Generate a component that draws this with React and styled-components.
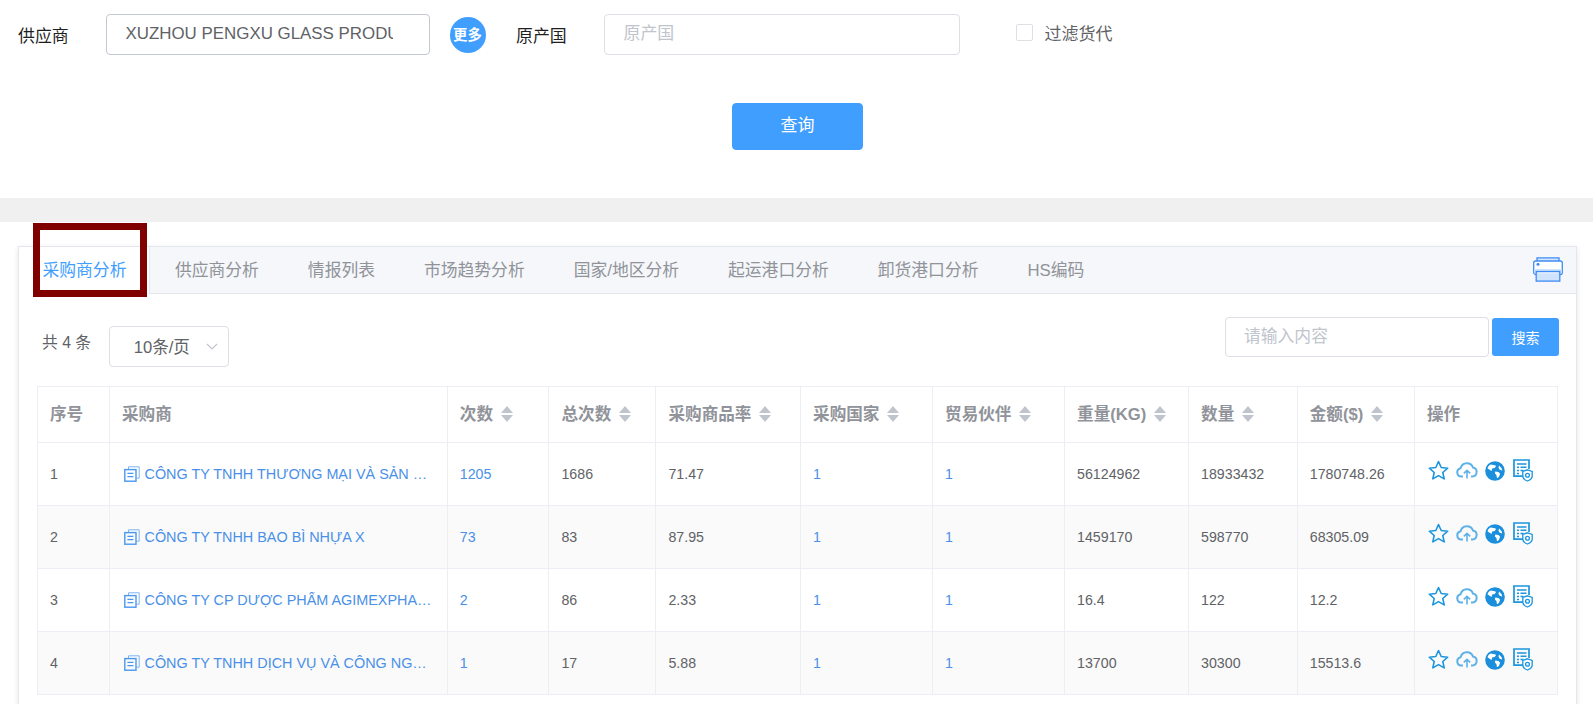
import React from "react";
import styled, { createGlobalStyle } from "styled-components";

const Global = createGlobalStyle`
  html, body { margin: 0; padding: 0; background: #fff; height: 704px; overflow: hidden; }
  body { font-family: "Liberation Sans", "Noto Sans CJK SC", sans-serif; }
  * { box-sizing: border-box; }
`;
const Page = styled.div`width: 1593px; height: 704px; overflow: hidden; background: #fff;`;
const FilterPanel = styled.section`height: 198px; padding: 14px 0 0 18px;`;
const FilterRow = styled.div`display: flex; align-items: center; height: 41px;`;
const FieldLabel = styled.label`width: 88px; font-size: 16.9px; color: #1f1f1f; flex: none; margin-top: -1px;`;
const TextInput = styled.input`
  width: ${p => p.$w}px; height: 41px; flex: none; padding: 0 36px 2px 18.5px;
  border: 1px solid ${p => p.$strong ? "#c4c8d0" : "#dcdfe6"}; border-radius: 4px; outline: none;
  font: 16.9px "Liberation Sans", "Noto Sans CJK SC", sans-serif; color: #606266; background: #fff;
  &::placeholder { color: #c0c4cc; }
`;
const MoreButton = styled.button`
  width: 36px; height: 36px; margin: 0 30.5px 0 19.5px; flex: none; border: 0; border-radius: 50%; padding: 0 0 2px;
  background: #409eff; color: #fff; font: bold 14.4px "Liberation Sans", "Noto Sans CJK SC", sans-serif; white-space: nowrap;
`;
const CheckWrap = styled.label`display: flex; align-items: center; margin-left: 55.5px; color: #606266; font-size: 17px; gap: 12px; margin-top: -5px;`;
const CheckBox = styled.span`width: 17px; height: 17px; border: 1px solid #dcdfe6; border-radius: 2px; background: #fff;`;
const QueryButton = styled.button`
  display: block; width: 131px; height: 47.5px; margin: 47.5px 0 0 714px; padding: 0 0 5px; border: 1px solid #409eff; border-radius: 4px;
  background: #409eff; color: #fff; font: 17px "Liberation Sans", "Noto Sans CJK SC", sans-serif;
`;
const GreyBand = styled.div`height: 24px; background: #f0f0f0;`;
const Main = styled.main`padding: 24px 16px 0 18px;`;
const Card = styled.div`
  width: 1559px; height: 600px; border: 1px solid #e4e7ed; background: #fff;
  box-shadow: 0 2px 6px rgba(0,0,0,.10);
`;
const TabBar = styled.div`
  position: relative; display: flex; height: 47px; background: #f5f7fa; border-bottom: 1px solid #e4e7ed;
`;
const Tab = styled.div`
  position: relative; height: ${p => p.$active ? "47px" : "46px"}; padding: 1px 24.5px 0; line-height: 46px; font-size: 16.8px;
  color: ${p => p.$active ? "#409eff" : "#909399"};
  background: ${p => p.$active ? "#fff" : "transparent"};
  border-right: ${p => p.$active ? "1px solid #e4e7ed" : "0"};
  &:first-child { padding-left: 23.5px; padding-right: 23px; }
`;
const Highlight = styled.span`
  position: absolute; left: 14px; top: -24px; width: 114px; height: 74px; border: 7px solid #800000; pointer-events: none;
`;
const PrintIcon = styled.svg`position: absolute; right: 13px; top: 10px;`;
const Body = styled.div`padding: 0 18px;`;
const Toolbar = styled.div`display: flex; justify-content: space-between; align-items: flex-start; height: 92px; padding-top: 23px; margin-right: -1px;`;
const PageGroup = styled.div`display: flex; align-items: center; margin-top: 9px;`;
const Total = styled.span`font-size: 15.8px; color: #606266; margin: -11px 18px 0 5px;`;
const PageSelect = styled.div`
  position: relative; width: 120px; height: 41px; padding-left: 23.5px; line-height: 41px;
  border: 1px solid #dcdfe6; border-radius: 4px; font-size: 16.6px; color: #606266;
`;
const Chevron = styled.svg`position: absolute; right: 10px; top: 16px;`;
const SearchGroup = styled.div`display: flex; align-items: center; gap: 3px;`;
const SearchInput = styled.input`
  width: 264px; height: 40px; padding: 0 18px; border: 1px solid #dcdfe6; border-radius: 4px; outline: none;
  font: 16.8px "Liberation Sans", "Noto Sans CJK SC", sans-serif;
  &::placeholder { color: #c0c4cc; }
`;
const SearchButton = styled.button`
  width: 67px; height: 38px; border: 0; border-radius: 3px; background: #409eff; color: #fff;
  font: 14px "Liberation Sans", "Noto Sans CJK SC", sans-serif;
`;
const Table = styled.table`
  width: 1520.5px; table-layout: fixed; border-collapse: collapse; border: 1px solid #ebeef5;
`;
const Col = styled.col`width: ${p => p.$w}px;`;
const Th = styled.th`
  height: 56px; padding: 0 12px 4px; border: 1px solid #ebeef5; text-align: left; font-size: 16.6px; font-weight: bold; color: #909399; white-space: nowrap;
`;
const Row = styled.tr`background: ${p => p.$even ? "#fafafa" : "#fff"};`;
const Td = styled.td`
  height: 63px; padding: 0 12px; border: 1px solid #ebeef5; font-size: 14.2px; color: ${p => p.$link ? "#4a90e8" : "#606266"}; white-space: nowrap;
`;
const BuyerLink = styled.div`display: flex; align-items: center; gap: 5px; color: #4a90e8; padding-left: 1.5px;`;
const BuyerName = styled.span`flex: 1; min-width: 0; overflow: hidden; text-overflow: ellipsis; white-space: nowrap; padding-right: 1px; font-size: 14.4px;`;
const HeadInner = styled.span`display: inline-flex; align-items: center; gap: 8px;`;
const Caret = styled.svg`flex: none; margin-top: 3px;`;
const Actions = styled.div`display: flex; align-items: center; gap: 7px; margin: -7px 0 0 1.5px;`;
const DocIcon = styled.svg`margin-left: 1px;`;

const tabs = ["采购商分析", "供应商分析", "情报列表", "市场趋势分析", "国家/地区分析", "起运港口分析", "卸货港口分析", "HS编码"];
const widths = [72, 337.8, 101.7, 107, 144.6, 132, 132, 124, 108.7, 117.2, 143.5];
const heads = [["序号"], ["采购商"], ["次数", 1], ["总次数", 1], ["采购商品率", 1], ["采购国家", 1], ["贸易伙伴", 1], ["重量(KG)", 1], ["数量", 1], ["金额($)", 1], ["操作"]];
const rows = [
  ["1", "CÔNG TY TNHH THƯƠNG MẠI VÀ SẢN XUẤT BAO BÌ VIỆT NAM", "1205", "1686", "71.47", "1", "1", "56124962", "18933432", "1780748.26"],
  ["2", "CÔNG TY TNHH BAO BÌ NHỰA X", "73", "83", "87.95", "1", "1", "1459170", "598770", "68305.09"],
  ["3", "CÔNG TY CP DƯỢC PHẨM AGIMEXPHARM AN GIANG", "2", "86", "2.33", "1", "1", "16.4", "122", "12.2"],
  ["4", "CÔNG TY TNHH DỊCH VỤ VÀ CÔNG NGHỆ VIỆT NAM", "1", "17", "5.88", "1", "1", "13700", "30300", "15513.6"],
];
const linkCols = new Set([2, 5, 6]);

const SortCaret = () => (
  <Caret width="12" height="16" viewBox="0 0 12 16"><path d="M6 0l6 7H0z M0 9h12l-6 7z" fill="#c0c4cc" /></Caret>
);
const CopyIcon = () => (
  <svg width="16" height="16" viewBox="0 0 16 16" fill="none" stroke="#4a97f0" style={{ flex: "none" }}>
    <path d="M4.5 3.5V.8h10.7v11.4h-2.7" strokeWidth="1" stroke="#7db4f5" />
    <rect x="0.8" y="3.6" width="11.2" height="11.6" strokeWidth="1.4" />
    <path d="M3.4 7.4h6M3.4 10.6h6" strokeWidth="1.2" />
  </svg>
);
const Star = () => (
  <svg width="21" height="21" viewBox="0 0 21 21" fill="none" stroke="#1b95de" strokeWidth="1.6" strokeLinejoin="round">
    <path d="M10.5 1.5l2.7 6 6.5.7-4.9 4.3 1.4 6.4-5.7-3.3-5.7 3.3 1.4-6.4L1.3 8.2l6.5-.7z" />
  </svg>
);
const Cloud = () => (
  <svg width="22" height="17" viewBox="0 0 22 17" fill="none" stroke="#5fb2e8" strokeWidth="2" strokeLinejoin="round">
    <path d="M7 14.5H5.2A4.2 4.2 0 0 1 4.6 6.2 6.5 6.5 0 0 1 17 5.6a4.5 4.5 0 0 1-.5 8.9H15" />
    <path d="M11 16.5V8.5M7.8 11.4l3.2-3 3.2 3" strokeWidth="1.6" />
  </svg>
);
const Globe = () => (
  <svg width="20" height="20" viewBox="0 0 20 20">
    <circle cx="10" cy="10" r="9.8" fill="#1b8fdb" />
    <path d="M5.5 3.5c2 .3 4.2.2 5.6 1.6l-1.4 2-2.6.4-.5 2.4-2.4-1.3-1.7-1.3C3 5.6 4 4.3 5.5 3.5zM10.3 10.6l3.2.4 1.6 1.7-1.2 3.2-1.9 1.3-.6-3.2-1.5-1.5zM14 4.6l2.6 2.6.6 2.2-2.5-.6-1.2-2z" fill="#fff" />
  </svg>
);
const Doc = () => (
  <DocIcon width="20" height="23" viewBox="0 0 20 23" fill="none" stroke="#1b95de">
    <path d="M11 17.2H1V1h15v9" strokeWidth="1.7" />
    <path d="M4 5h9.5M4 8.2h2M7.5 8.2h6M4 11.4h2M7.5 11.4h3M4 14.4h2" strokeWidth="1.5" />
    <path d="M14.5 10.8l4.7 1.6v4.6c0 2.6-2.4 4.2-4.7 5-2.3-.8-4.7-2.4-4.7-5v-4.6z" fill="#fff" strokeWidth="1.3" />
    <circle cx="14.5" cy="16.3" r="1.9" strokeWidth="1.3" />
  </DocIcon>
);
const Printer = () => (
  <PrintIcon width="30" height="25" viewBox="0 0 30 25" fill="none" stroke="#3f8cf5" strokeWidth="1.3">
    <path d="M4 4.5V.8h22v3.7" fill="#d6e6fc" />
    <rect x="0.7" y="4" width="28.6" height="13.5" rx="2" fill="#fff" />
    <path d="M1.3 12h27.4v3.6a1.4 1.4 0 0 1-1.4 1.4H2.7a1.4 1.4 0 0 1-1.4-1.4z" fill="#cfe3fc" stroke="none" />
    <rect x="3.2" y="14.5" width="23.6" height="9.6" fill="#cfe3fc" />
    <path d="M5 16h20" stroke="#eaf3fe" strokeWidth="1" />
    <circle cx="5" cy="7.2" r="1.5" fill="#3f8cf5" stroke="none" />
  </PrintIcon>
);

export default function App() {
  return (
    <Page>
      <Global />
      <FilterPanel>
        <FilterRow>
          <FieldLabel>供应商</FieldLabel>
          <TextInput $w={324} $strong readOnly value="XUZHOU PENGXU GLASS PRODUCTS CO., LTD" />
          <MoreButton>更多</MoreButton>
          <FieldLabel>原产国</FieldLabel>
          <TextInput $w={356} placeholder="原产国" />
          <CheckWrap><CheckBox />过滤货代</CheckWrap>
        </FilterRow>
        <QueryButton>查询</QueryButton>
      </FilterPanel>
      <GreyBand />
      <Main>
        <Card>
          <TabBar>
            {tabs.map((t, i) => (
              <Tab key={t} $active={i === 0}>{t}{i === 0 && <Highlight />}</Tab>
            ))}
            <Printer />
          </TabBar>
          <Body>
            <Toolbar>
              <PageGroup>
                <Total>共 4 条</Total>
                <PageSelect>
                  10条/页
                  <Chevron width="12" height="8" viewBox="0 0 12 8" fill="none" stroke="#c0c4cc" strokeWidth="1.1"><path d="M1 1l5 5 5-5" /></Chevron>
                </PageSelect>
              </PageGroup>
              <SearchGroup>
                <SearchInput placeholder="请输入内容" />
                <SearchButton>搜索</SearchButton>
              </SearchGroup>
            </Toolbar>
            <Table>
              <colgroup>{widths.map((w, i) => <Col key={i} $w={w} />)}</colgroup>
              <thead>
                <tr>
                  {heads.map(([label, sortable]) => (
                    <Th key={label}><HeadInner>{label}{sortable && <SortCaret />}</HeadInner></Th>
                  ))}
                </tr>
              </thead>
              <tbody>
                {rows.map((r, ri) => (
                  <Row key={r[0]} $even={ri % 2 === 1}>
                    {r.map((c, i) => i === 1 ? (
                      <Td key={i}><BuyerLink><CopyIcon /><BuyerName>{c}</BuyerName></BuyerLink></Td>
                    ) : (
                      <Td key={i} $link={linkCols.has(i)}>{c}</Td>
                    ))}
                    <Td><Actions><Star /><Cloud /><Globe /><Doc /></Actions></Td>
                  </Row>
                ))}
              </tbody>
            </Table>
          </Body>
        </Card>
      </Main>
    </Page>
  );
}
